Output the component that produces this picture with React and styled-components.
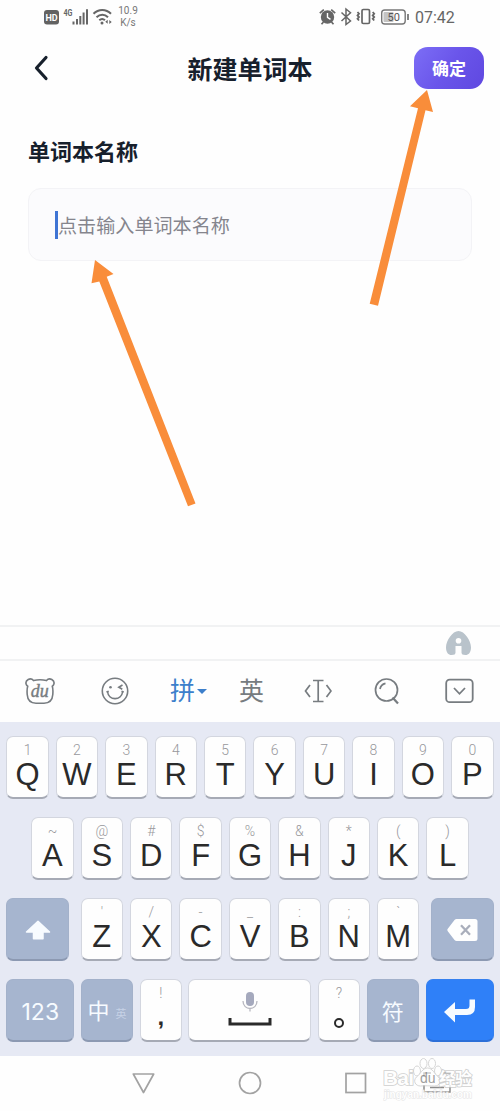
import React, { useState } from 'react';
import styled, { createGlobalStyle, css } from 'styled-components';

const GlobalStyle = createGlobalStyle`
  * {
    box-sizing: border-box;
  }
  body {
    margin: 0;
    background: #fefefe;
    font-family: "Liberation Sans", "Noto Sans CJK SC", sans-serif;
  }
  button, input {
    font-family: inherit;
  }
`;

const Screen = styled.div`
  position: relative;
  display: flex;
  flex-direction: column;
  width: 500px;
  height: 1111px;
  overflow: hidden;
  background: #fefefe;
`;

const StatusBar = styled.div`
  display: flex;
  justify-content: space-between;
  align-items: center;
  height: 34px;
  padding: 0 46px 0 44px;
  color: #666;
`;
const StatusGroup = styled.div`
  display: flex;
  align-items: center;
`;
const Speed = styled.div`
  margin-left: 5px;
  width: 22px;
  font: 10px/12.5px Roboto, sans-serif;
  text-align: center;
  color: #777;
`;
const Clock = styled.div`
  margin: 2px 0 0 6px;
  font: 16px/20px Roboto, sans-serif;
  width: 39px;
  white-space: nowrap;
`;

const Header = styled.header`
  display: grid;
  grid-template-columns: 100px 1fr 100px;
  align-items: center;
  height: 68px;
`;
const BackButton = styled.button`
  display: flex;
  margin-left: 34px;
  padding: 0;
  border: 0;
  background: none;
`;
const Title = styled.h1`
  margin: 0;
  font: 700 25px/36px "Noto Sans CJK SC", sans-serif;
  text-align: center;
  color: #17202c;
`;
const ConfirmButton = styled.button`
  justify-self: end;
  width: 70px;
  height: 42px;
  margin-right: 16px;
  padding: 0 0 1px;
  border: 0;
  border-radius: 14px;
  background: linear-gradient(125deg, #7c6ef6 0%, #6a55ea 50%, #5f48e0 100%);
  color: #fff;
  font: 700 17px/24px "Noto Sans CJK SC", sans-serif;
`;

const Form = styled.main`
  display: flex;
  flex-direction: column;
  height: 523px;
  padding: 33px 28px 0;
`;
const Label = styled.label`
  margin-bottom: 23px;
  font: 700 22px/30px "Noto Sans CJK SC", sans-serif;
  color: #17202c;
`;
const Field = styled.div`
  display: flex;
  align-items: center;
  height: 73px;
  padding-left: 26px;
  border: 1px solid #f3f3f6;
  border-radius: 13px;
  background: #fbfbfd;
`;
const Caret = styled.span`
  width: 3px;
  height: 28px;
  background: #3f74d4;
`;
const NameInput = styled.input`
  flex: 1;
  height: 40px;
  padding: 0;
  border: 0;
  outline: 0;
  background: none;
  font: 19.1px/28px "Noto Sans CJK SC", sans-serif;
  &::placeholder {
    color: #85858d;
    opacity: 1;
  }
`;

const AssistStrip = styled.div`
  display: flex;
  justify-content: flex-end;
  align-items: center;
  height: 36px;
  padding-right: 28px;
  border-top: 2px solid #f1f2f3;
  border-bottom: 2px solid #f1f2f3;
`;
const Toolbar = styled.div`
  display: grid;
  grid-template-columns: 76px 69.5px 69px 65px 70px 71px 29px;
  align-items: center;
  height: 61px;
  padding: 0 0 2px 24.5px;
  color: #777c80;
`;
const Tool = styled.div`
  display: flex;
  align-items: center;
  font: 25px/36px "Noto Sans CJK SC", sans-serif;
  color: ${props => (props.$active ? '#3c7fcb' : 'inherit')};
`;
const ToolText = styled.span`
  margin-bottom: 3px;
`;
const DropMark = styled.span`
  margin: 1px 0 0 2px;
  border: 5px solid transparent;
  border-top-color: currentColor;
  border-bottom: 0;
`;

const Keyboard = styled.section`
  display: flex;
  flex-direction: column;
  gap: 18px;
  height: 334px;
  padding: 14px 6.3px 0 6.3px;
  background: #e6e9f4;
`;
const KeyRow = styled.div`
  display: flex;
  justify-content: ${props => (props.$center ? 'center' : 'space-between')};
  gap: ${props => props.$gap || 6.9}px;
  height: 63px;
`;
const KeyGroup = styled.div`
  display: flex;
  gap: 6.9px;
`;
const KeyCap = styled.button`
  display: flex;
  flex-direction: column;
  align-items: center;
  flex: none;
  width: ${props => props.$width || 42.5}px;
  height: 63px;
  padding: 5px 0 0;
  border: 1px solid #d3d6df;
  border-bottom: 2px solid #a6aab5;
  border-radius: 7px;
  background: #fefefe;
  color: #2a2a2a;
  ${props => props.$tone && css`
    flex-direction: row;
    justify-content: center;
    padding: 1px 0 0;
    border-color: ${props.$tone === 'blue' ? '#3580ef' : '#a3b1ca'};
    border-bottom-color: ${props.$tone === 'blue' ? '#2c6fd8' : '#8c99b2'};
    background: ${props.$tone === 'blue' ? '#2f80f8' : '#a6b5cf'};
    color: #f7fbff;
  `}
`;
const Hint = styled.span`
  height: 15px;
  font: 300 14px/16px Roboto, sans-serif;
  color: #98989c;
`;
const Letter = styled.span`
  margin-top: -0.5px;
  font: 31px/36px "Liberation Sans", sans-serif;
`;
const Mark = styled.span`
  font: 700 24px/24px "Liberation Sans", sans-serif;
  margin-top: 5px;
`;
const FullStop = styled.span`
  width: 10px;
  height: 10px;
  margin-top: 17.5px;
  border: 2px solid #2a2a2a;
  border-radius: 50%;
`;
const KeyText = styled.span`
  margin-top: ${props => props.$drop || 0}px;
  font: ${props => props.$size || 22}px/30px Inter, "Noto Sans CJK SC", sans-serif;
`;
const SmallText = styled.span`
  margin: 5px 0 0 6px;
  font: 11px/16px "Noto Sans CJK SC", sans-serif;
  color: #c6d2e6;
`;

const NavBar = styled.nav`
  position: relative;
  display: grid;
  grid-template-columns: 106px 105.5px 79.5px 28px;
  align-items: start;
  height: 55px;
  padding: 15px 0 0 132px;
`;
const Watermark = styled.div`
  position: absolute;
  left: 383px;
  top: 1px;
  width: 92px;
  height: 44px;
  opacity: 0.8;
`;

const topRow = [['Q', '1'], ['W', '2'], ['E', '3'], ['R', '4'], ['T', '5'], ['Y', '6'], ['U', '7'], ['I', '8'], ['O', '9'], ['P', '0']];
const homeRow = [['A', '~'], ['S', '@'], ['D', '#'], ['F', '$'], ['G', '%'], ['H', '&'], ['J', '*'], ['K', '('], ['L', ')']];
const bottomRow = [['Z', "'"], ['X', '/'], ['C', '-'], ['V', '_'], ['B', ':'], ['N', ';'], ['M', '`']];

const Arrows = styled.svg`
  position: absolute;
  left: 0;
  top: 0;
  pointer-events: none;
`;

const Key = ({ letter, hint, onPress }) => (
  <KeyCap onClick={() => onPress(letter)}>
    <Hint>{hint}</Hint>
    <Letter>{letter}</Letter>
  </KeyCap>
);

const StatusLeft = () => (
  <StatusGroup>
    <svg width="68" height="22" viewBox="44 6 68 22">
      <rect x="44" y="10" width="15" height="14.5" rx="3" fill="#626262" />
      <text x="51.5" y="20.7" textAnchor="middle" fontFamily="Roboto" fontWeight="700" fontSize="9" fill="#fff">HD</text>
      <text x="63.5" y="15.5" fontFamily="Roboto" fontWeight="700" fontSize="9" textLength="9" lengthAdjust="spacingAndGlyphs" fill="#666">4G</text>
      <g stroke="#666" strokeWidth="2">
        <path d="M73.5 21.5v3M77 19v5.5M80.3 16v8.5M83.6 12.5v12M87 9.3v15.2" />
      </g>
      <g fill="none" stroke="#666" strokeWidth="2">
        <path d="M93.5 13.8c5-5.2 12.5-5.2 17.5 0M96.5 17.2c3.5-3.3 8.2-3.3 11.5 0M99.3 20.2c1.8-1.7 4-1.7 5.6 0" />
      </g>
      <circle cx="102" cy="23" r="1.5" fill="#666" />
      <path d="M105.3 21.8l2.4-2v4zM111.7 22l-2.4-2v4z" fill="#666" />
    </svg>
    <Speed>10.9<br />K/s</Speed>
  </StatusGroup>
);

const StatusRight = () => (
  <StatusGroup>
    <svg width="90" height="22" viewBox="319 6 90 22">
      <circle cx="327.5" cy="17" r="6.7" fill="#666" />
      <path d="M327.5 13v4.3l3 2" fill="none" stroke="#fff" strokeWidth="1.4" />
      <path d="M319.8 13.2l4-3.6M335.2 13.2l-4-3.6M323.5 22l-2 2.2M331.5 22l2 2.2" stroke="#666" strokeWidth="1.7" />
      <path d="M341.5 12.5l9 8.5-4.5 3.5V9l4.5 3.7-9 8.3" fill="none" stroke="#666" strokeWidth="1.5" />
      <rect x="362" y="9.5" width="7.5" height="14" rx="1.3" fill="none" stroke="#666" strokeWidth="1.7" />
      <path d="M357.5 12l1.5 1.7-1.5 1.7 1.5 1.7-1.5 1.7 1.5 1.7M372.7 12l1.5 1.7-1.5 1.7 1.5 1.7-1.5 1.7 1.5 1.7" fill="none" stroke="#666" strokeWidth="1.8" />
      <rect x="381.7" y="10" width="23.5" height="14" rx="3" fill="#fff" stroke="#777" strokeWidth="1.4" />
      <rect x="383.5" y="12" width="10" height="10" rx="1" fill="#c4c4c4" />
      <text x="393.8" y="21" textAnchor="middle" fontFamily="Roboto" fontSize="11" fill="#555">50</text>
      <path d="M408 14v6" stroke="#666" strokeWidth="1.6" />
    </svg>
    <Clock>07:42</Clock>
  </StatusGroup>
);

const BearIcon = () => (
  <svg width="30" height="28" viewBox="0 0 30 28" fill="none" stroke="currentColor" strokeWidth="1.6">
    <path d="M8.5 3.5C5.5-.2-.2 3.3 1.2 7.3c.3 1 1 1.5 1.5 1.9C1.8 12 2 15 2.2 17.5 2.6 23 6 26.2 11 26.2h8c5 0 8.4-3.2 8.8-8.7.2-2.5.4-5.5-.5-8.3.5-.4 1.2-.9 1.5-1.9 1.4-4-4.3-7.5-7.3-3.8-4-1-9-1-13 0z" />
    <text x="14.8" y="19.5" textAnchor="middle" fontFamily="Liberation Serif" fontStyle="italic" fontSize="18" fill="currentColor" strokeWidth="0.4">du</text>
  </svg>
);

const WinkIcon = () => (
  <svg width="28" height="28" viewBox="0 0 28 28" fill="none" stroke="currentColor" strokeWidth="1.6">
    <circle cx="14" cy="14" r="12.7" />
    <path d="M6.5 14.5c1 9.5 14 9.5 15.2 0M21.5 8l-3.7 2.2 3.5 2" />
    <path d="M5.5 15l2.2-.8M22.7 15l-2.2-.8" />
    <circle cx="9.5" cy="10.3" r="1.3" fill="currentColor" stroke="none" />
  </svg>
);

const Annotations = () => (
  <Arrows width="500" height="520" viewBox="0 0 500 520" fill="#f98d3a">
    <path d="M95 260l18.5 14-6.8 2.8L195.5 503.5l-7.5 2.8L99.3 281.5 91.5 283.3z" />
    <path d="M427 90l6 22-7.5-1.8L378 305.8l-8.3-2L418 108.300l-8-2z" />
  </Arrows>
);

const App = () => {
  const [name, setName] = useState('');
  const press = (letter) => setName(name + letter.toLowerCase());
  const renderKeys = (keys) => keys.map(([letter, hint]) => (
    <Key key={letter} letter={letter} hint={hint} onPress={press} />
  ));

  return (
    <Screen>
      <GlobalStyle />
      <StatusBar>
        <StatusLeft />
        <StatusRight />
      </StatusBar>
      <Header>
        <BackButton>
          <svg width="15" height="26" viewBox="0 0 15 26" fill="none" stroke="#17202c" strokeWidth="3.2" strokeLinecap="round" strokeLinejoin="round">
            <path d="M12 2.5L2.5 13 12 23.5" />
          </svg>
        </BackButton>
        <Title>新建单词本</Title>
        <ConfirmButton>确定</ConfirmButton>
      </Header>
      <Form>
        <Label htmlFor="book-name">单词本名称</Label>
        <Field>
          <Caret />
          <NameInput id="book-name" placeholder="点击输入单词本名称" value={name} onChange={(event) => setName(event.target.value)} />
        </Field>
      </Form>

      <AssistStrip>
        <svg width="27" height="26" viewBox="0 0 27 26">
          <path d="M13.5 1C19.500 1 26 10.500 26 17.500c0 5-2.500 7.500-5.500 7.500-3 0-4-.8-4-2.500v-6.500h-6v6.500c0 1.700-1 2.500-4 2.500C3.500 25 1 22.500 1 17.500 1 10.500 7.500 1 13.500 1z" fill="#b9c3cb" />
          <circle cx="13.5" cy="10.7" r="2.8" fill="#fefefe" />
        </svg>
      </AssistStrip>
      <Toolbar>
        <Tool><BearIcon /></Tool>
        <Tool><WinkIcon /></Tool>
        <Tool $active><ToolText>拼</ToolText><DropMark /></Tool>
        <Tool><ToolText>英</ToolText></Tool>
        <Tool>
          <svg width="28" height="24" viewBox="0 0 28 24" fill="none" stroke="currentColor" strokeWidth="1.7">
            <path d="M9 1.5h10.5M14.2 1.5v21M9 22.5h10.5M6 6L1.5 12 6 18M22.5 6l4.5 6-4.5 6" />
          </svg>
        </Tool>
        <Tool>
          <svg width="26" height="28" viewBox="0 0 26 28" fill="none" stroke="currentColor" strokeWidth="1.7">
            <circle cx="12.5" cy="13" r="11" />
            <path d="M6 12c.5-3 2.5-5 5.5-5.7" />
            <path d="M18.500 20.500l5.500 6" strokeWidth="2.2" />
          </svg>
        </Tool>
        <Tool>
          <svg width="29" height="26" viewBox="0 0 29 26" fill="none" stroke="currentColor" strokeWidth="1.8">
            <rect x="1.2" y="1.7" width="26.5" height="22.5" rx="3.5" />
            <path d="M9 10l5.5 5.8L20 10" />
          </svg>
        </Tool>
      </Toolbar>

      <Keyboard>
        <KeyRow>{renderKeys(topRow)}</KeyRow>
        <KeyRow $center>{renderKeys(homeRow)}</KeyRow>
        <KeyRow>
          <KeyCap $tone="gray" $width={63}>
            <svg width="26" height="20" viewBox="0 0 26 20" fill="#f7fbff" stroke="#f7fbff" strokeWidth="1.5" strokeLinejoin="round">
              <path d="M13 1.2L24.5 12H18v6.7H8.5V12h-7z" />
            </svg>
          </KeyCap>
          <KeyGroup>{renderKeys(bottomRow)}</KeyGroup>
          <KeyCap $tone="gray" $width={63} onClick={() => setName(name.slice(0, -1))}>
            <svg width="31" height="24" viewBox="0 0 31 24">
              <path d="M9.5 1H28q2.5 0 2.5 2.5v17q0 2.5-2.5 2.5H9.5q-1 0-2-1L.8 13.2q-1-1.2 0-2.4L7.5 2q1-1 2-1z" fill="#fefefe" />
              <path d="M14 7.3l9 9.4M23 7.3l-9 9.4" stroke="#a9aebb" strokeWidth="2.3" />
            </svg>
          </KeyCap>
        </KeyRow>
        <KeyRow $gap={5}>
          <KeyCap $tone="gray" $width={68}><KeyText $size={23} $drop={3}>123</KeyText></KeyCap>
          <KeyCap $tone="gray" $width={52.5}><KeyText>中</KeyText><SmallText>英</SmallText></KeyCap>
          <KeyCap $width={42}><Hint>!</Hint><Mark>,</Mark></KeyCap>
          <KeyCap $width={123}>
            <svg width="44" height="42" viewBox="0 0 44 42">
              <rect x="18" y="7" width="8" height="14" rx="4" fill="#a5a9bd" />
              <path d="M15 16c0 10 14 10 14 0M22 23.5v3" fill="none" stroke="#b8b8c0" strokeWidth="1.3" />
              <path d="M2 33v6h40v-6" fill="none" stroke="#2a2a2a" strokeWidth="3" />
            </svg>
          </KeyCap>
          <KeyCap $width={42}><Hint>?</Hint><FullStop /></KeyCap>
          <KeyCap $tone="gray" $width={52.5}><KeyText $drop={2}>符</KeyText></KeyCap>
          <KeyCap $tone="blue" $width={68}>
            <svg width="33" height="26" viewBox="0 0 33 26">
              <path d="M1 14L12 4v7h11q3.5 0 3.5-3.5V1.5H32V9q0 8-8 8H12v7.5z" fill="#f7fbff" />
            </svg>
          </KeyCap>
        </KeyRow>
      </Keyboard>

      <NavBar>
        <svg width="24" height="24" viewBox="0 0 24 24" fill="none" stroke="#a2a2a2" strokeWidth="1.7" strokeLinejoin="round">
          <path d="M1.3 3h20.4L11.5 21.5z" />
        </svg>
        <svg width="24" height="24" viewBox="0 0 24 24" fill="none" stroke="#a2a2a2" strokeWidth="1.7">
          <circle cx="12" cy="12" r="10.5" />
        </svg>
        <svg width="24" height="24" viewBox="0 0 24 24" fill="none" stroke="#a2a2a2" strokeWidth="1.7">
          <rect x="2" y="2.5" width="19.5" height="19" />
        </svg>
        <svg width="28" height="24" viewBox="0 0 28 24" fill="none" stroke="#8c8c8c" strokeWidth="1.5">
          <path d="M1 6V2h7M20 2h7v4M1 14v7h26v-7M7 16.500h14" />
        </svg>
        <Watermark>
          <svg width="92" height="44" viewBox="0 0 92 44">
            <g fill="#fff" fillOpacity="0.7" stroke="#ccc" strokeWidth="1">
              <ellipse cx="34" cy="14" rx="3.5" ry="5" />
              <ellipse cx="40.5" cy="6.5" rx="3.5" ry="5" />
              <ellipse cx="49" cy="6.5" rx="3.5" ry="5" />
              <ellipse cx="55" cy="14" rx="3.5" ry="5" />
              <path d="M44.5 11c5 0 7 6 11 9 4 4 1 9-4 9-4 0-9-.5-14 0-5 0-8-5-4-9 4-3 6-9 11-9z" />
            </g>
            <g fill="#fff" stroke="#c4c4c4" strokeWidth="1.6" paintOrder="stroke" fontWeight="700">
              <text x="0" y="28" fontFamily="Liberation Sans" fontSize="21" textLength="31">Bai</text>
              <text x="37" y="26" fontFamily="Liberation Sans" fontSize="14" fontWeight="400" fill="#888" stroke="none">du</text>
              <text x="56" y="28" fontFamily="Noto Sans CJK SC" fontSize="17" textLength="33">经验</text>
              <text x="1" y="40.5" fontFamily="Liberation Sans" fontSize="10" textLength="88" stroke="#ddd" strokeWidth="1">jingyan.baidu.com</text>
            </g>
          </svg>
        </Watermark>
      </NavBar>
      <Annotations />
    </Screen>
  );
};

export default App;
